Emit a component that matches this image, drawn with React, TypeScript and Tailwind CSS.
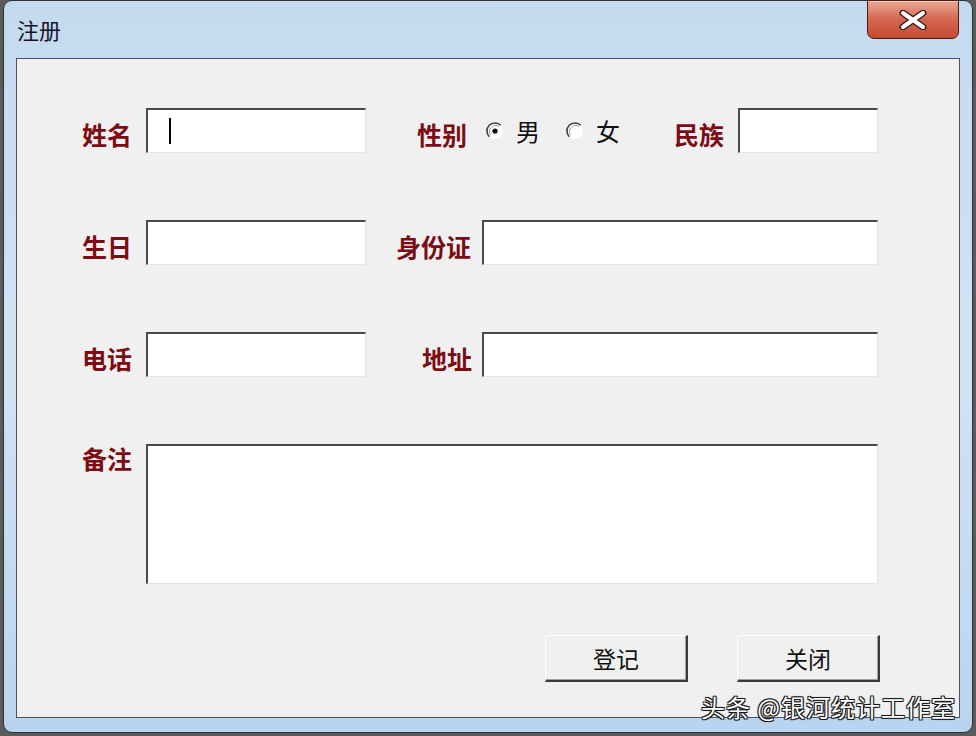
const cjk = "font-['Noto_Sans_CJK_SC','Noto_Sans',sans-serif]"

function Label({ text, className = '' }: { text: string; className?: string }) {
  return (
    <span className={`text-[25px] font-bold leading-none text-[#7b0c14] ${className}`}>{text}</span>
  )
}

function TextBox({ className = '', caret = false }: { className?: string; caret?: boolean }) {
  return (
    <div
      className={`relative box-border border-t-2 border-l-2 border-b border-r border-t-[#4a4a4a] border-l-[#4a4a4a] border-b-[#e2e2e2] border-r-[#e2e2e2] bg-white ${className}`}
    >
      {caret && <div className="absolute left-[21px] top-[8px] h-[26px] w-[2px] bg-black" />}
    </div>
  )
}

function Radio({ checked, label }: { checked: boolean; label: string }) {
  return (
    <div className="flex items-center gap-[12px]">
      <svg width="18" height="18" viewBox="0 0 18 18">
        <circle cx="9" cy="9" r="8" fill="#ffffff" />
        <path d="M3.3 14.7 A8 8 0 0 1 14.7 3.3" fill="none" stroke="#3c3c3c" strokeWidth="1.6" />
        <path d="M4.8 13.2 A6 6 0 0 1 13.2 4.8" fill="none" stroke="#9a9a9a" strokeWidth="1" />
        {checked && <circle cx="9" cy="9" r="2.6" fill="#111" />}
      </svg>
      <span className="text-[24px] leading-none text-[#111]">{label}</span>
    </div>
  )
}

function Button({ text }: { text: string }) {
  return (
    <button className="box-border flex h-[47px] w-[143px] items-center justify-center border-t border-l border-b-2 border-r-2 border-t-white border-l-white border-b-[#3c3c3c] border-r-[#3c3c3c] bg-[#f0f0f0] text-[23px] leading-none text-[#111] shadow-[inset_-1px_-1px_0_#a0a0a0]">
      {text}
    </button>
  )
}

export default function App() {
  return (
    <div className={`relative h-[736px] w-[976px] overflow-hidden bg-[#5b5b5b] px-[3px] pb-[3px] ${cjk}`}>
      <div className="flex h-full flex-col rounded-[9px] border border-[#2e3038] bg-gradient-to-b from-[#c4daef] via-[#d2e3f3] to-[#b9d4f0]">
        <div className="relative flex h-[57px] shrink-0 items-center pl-[13px] pb-[2px]">
          <span className="text-[22px] leading-none text-[#14142a]">注册</span>
          <div className="absolute right-[13px] top-[-1px] flex h-[39px] w-[92px] items-center justify-center rounded-b-[7px] border border-[#4a1a14] bg-gradient-to-b from-[#e9a996] via-[#d56650] to-[#c64a33] shadow-[inset_0_1px_0_#f6cfc2]">
            <svg width="28" height="20" viewBox="0 0 28 20">
              <path d="M4 3 L24 17 M24 3 L4 17" stroke="#3a2020" strokeWidth="7" strokeLinecap="round" />
              <path d="M4 3 L24 17 M24 3 L4 17" stroke="#ffffff" strokeWidth="4" strokeLinecap="round" />
            </svg>
          </div>
        </div>
        <div className="flex flex-1 flex-col px-[12px] pb-[14px]">
          <div className="flex flex-1 flex-col border border-[#4b5160] bg-[#f0f0f0] pt-[49px]">
            <div className="grid grid-cols-[129px_220px_116px_396px] grid-rows-[45px_45px_45px] gap-y-[67px]">
              <div className="flex items-center justify-end pr-[14px] pt-[8px]">
                <Label text="姓名" />
              </div>
              <TextBox caret />
              <div className="col-span-2 flex items-center pl-[51px]">
                <Label text="性别" className="mt-[8px]" />
                <div className="ml-[19px] flex items-center gap-[26px]">
                  <Radio checked label="男" />
                  <Radio checked={false} label="女" />
                </div>
                <Label text="民族" className="ml-auto mr-[14px] mt-[8px]" />
                <TextBox className="h-[45px] w-[140px]" />
              </div>

              <div className="flex items-center justify-end pr-[14px] pt-[8px]">
                <Label text="生日" />
              </div>
              <TextBox />
              <div className="flex items-center justify-end pr-[11px] pt-[8px]">
                <Label text="身份证" />
              </div>
              <TextBox />

              <div className="flex items-center justify-end pr-[14px] pt-[8px]">
                <Label text="电话" />
              </div>
              <TextBox />
              <div className="flex items-center justify-end pr-[10px] pt-[8px]">
                <Label text="地址" />
              </div>
              <TextBox />
            </div>

            <div className="mt-[67px] flex">
              <div className="flex w-[129px] justify-end pr-[14px] pt-[2px]">
                <Label text="备注" />
              </div>
              <TextBox className="h-[140px] w-[732px]" />
            </div>

            <div className="mt-[51px] flex gap-[49px] pl-[528px]">
              <Button text="登记" />
              <Button text="关闭" />
            </div>
          </div>
        </div>
      </div>
      <div className="absolute bottom-[17px] right-[20px] text-[24px] leading-none tracking-[1px] text-white [text-shadow:-1px_-1px_0_#1a1a1a,1px_-1px_0_#1a1a1a,-1px_1px_0_#1a1a1a,1px_1px_0_#1a1a1a,0_0_2px_#000]">
        头条 @银河统计工作室
      </div>
    </div>
  )
}
